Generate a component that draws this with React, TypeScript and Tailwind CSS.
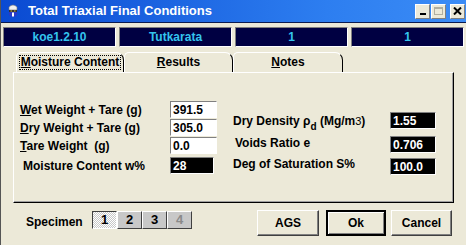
import React from "react";

const sunken =
  "border-t-[#808080] border-l-[#808080] border-b-white border-r-white border";

function AppIcon() {
  return (
    <svg width="12" height="15" viewBox="0 0 12 15">
      <path d="M2 3 Q6 -1 10 3 L10 6 L2 6 Z" fill="#f0f0f0" stroke="#7a7a7a" strokeWidth="0.6" />
      <rect x="2" y="6" width="8" height="2" fill="#333" />
      <rect x="3.5" y="6.5" width="1.5" height="1" fill="#e8c040" />
      <rect x="7" y="6.5" width="1.5" height="1" fill="#e8c040" />
      <path d="M2 8 L10 8 L10 11 Q6 15 2 11 Z" fill="#2a3ac8" />
      <rect x="5" y="8.5" width="2" height="4" fill="#ffffff" />
    </svg>
  );
}

function WinButton({ kind }: { kind: "min" | "max" | "close" }) {
  return (
    <div className="w-[15px] h-[15px] bg-[#ece9d8] border border-t-white border-l-white border-b-[#808080] border-r-[#808080] flex items-center justify-center">
      {kind === "min" && <div className="w-[6px] h-[2px] bg-black mt-[6px]" />}
      {kind === "max" && <div className="w-[9px] h-[8px] border border-[#b0aea0] border-t-2" />}
      {kind === "close" && (
        <svg width="9" height="8" viewBox="0 0 9 8">
          <path d="M1 0.5 L8 7.5 M8 0.5 L1 7.5" stroke="#000" strokeWidth="2" />
        </svg>
      )}
    </div>
  );
}

function Tab({ u, rest, active, w }: { u: string; rest: string; active?: boolean; w: string }) {
  return (
    <div
      className={`${w} h-[20px] border-t border-l border-r border-t-white border-l-white border-r-black rounded-tl-[5px] rounded-tr-[8px] flex items-center justify-center bg-[#ece9d8]`}
    >
      <span className={`text-[12px] font-bold leading-[13px] px-[1px] ${active ? "outline-1 outline-dotted outline-black" : ""}`}>
        <span className="underline">{u}</span>
        {rest}
      </span>
    </div>
  );
}

function Field({ value, w, dark }: { value: string; w: string; dark?: boolean }) {
  return (
    <div
      className={`${w} h-[17px] ${sunken} ${dark ? "bg-black text-white" : "bg-white text-black"} text-[12px] leading-[14px] pl-[2px] flex items-center`}
    >
      {value}
    </div>
  );
}

function Btn({ children, w, def }: { children: React.ReactNode; w: string; def?: boolean }) {
  return (
    <div
      className={`${w} h-[26px] bg-[#ece9d8] flex items-center justify-center text-[12px] font-bold ${
        def
          ? "border-2 border-black shadow-[inset_1px_1px_0_white,inset_-1px_-1px_0_#808080]"
          : "border border-t-white border-l-white border-b-[#404040] border-r-[#404040] shadow-[inset_-1px_-1px_0_#808080]"
      }`}
    >
      {children}
    </div>
  );
}

function SpecBtn({ n, pressed, disabled }: { n: string; pressed?: boolean; disabled?: boolean }) {
  return (
    <div
      className={`w-[25px] h-[18px] flex items-center justify-center text-[13px] font-bold border ${
        pressed
          ? "border-t-[#404040] border-l-[#404040] border-b-white border-r-white bg-[repeating-conic-gradient(#ffffff_0_25%,#c8c8c8_0_50%)] bg-[length:2px_2px]"
          : "bg-[#c8c8c8] border-t-white border-l-white border-b-[#404040] border-r-[#404040]"
      } ${disabled ? "text-[#8a8a8a]" : "text-black"}`}
    >
      {n}
    </div>
  );
}

export default function App() {
  const info = ["koe1.2.10", "Tutkarata", "1", "1"];

  return (
    <div className="w-[466px] h-[245px] bg-[#ece9d8] flex flex-col border-l border-[#555] overflow-hidden font-['Liberation_Sans',Arial,sans-serif] text-black">
      {/* title bar */}
      <div className="h-[23px] shrink-0 flex items-center pl-[6px] pr-[1px] bg-[linear-gradient(90deg,#0a4ad2,#2d7ef0_70%,#3b8cf6)] border-b border-[#0a1a50]">
        <AppIcon />
        <span className="ml-[9px] text-white font-bold text-[13px]">Total Triaxial Final Conditions</span>
        <div className="ml-auto flex items-center gap-[1px]">
          <WinButton kind="min" />
          <WinButton kind="max" />
          <div className="w-[2px]" />
          <WinButton kind="close" />
        </div>
      </div>

      {/* info boxes */}
      <div className="mt-[4px] px-[2px] flex gap-[3px]">
        {info.map((t, i) => (
          <div
            key={i}
            className={`flex-1 h-[20px] bg-[#000042] ${sunken} flex items-center justify-center text-[12px] font-bold text-[#34c4ee]`}
          >
            {t}
          </div>
        ))}
      </div>

      {/* tabs */}
      <div className="mt-[5px] ml-[15px] flex items-end">
        <Tab w="w-[108px]" u="M" rest="oisture Content" active />
        <Tab w="w-[109px]" u="R" rest="esults" />
        <Tab w="w-[110px]" u="N" rest="otes" />
      </div>

      {/* panel */}
      <div className="ml-[12px] w-[441px] h-[131px] shrink-0 border border-t-white border-l-white border-r-black border-b-black shadow-[inset_-1px_-1px_0_#a0a0a0] flex">
        <div className="ml-[6px] pt-[28px] w-[197px] flex flex-col text-[12px] font-bold">
          <div className="flex items-center h-[17px]">
            <span className="w-[150px]">
              <span className="underline">W</span>et Weight + Tare (g)
            </span>
            <Field value="391.5" w="w-[47px]" />
          </div>
          <div className="flex items-center h-[17px] mt-[1px]">
            <span className="w-[150px]">
              <span className="underline">D</span>ry Weight + Tare (g)
            </span>
            <Field value="305.0" w="w-[47px]" />
          </div>
          <div className="flex items-center h-[17px] mt-[1px]">
            <span className="w-[150px]">
              <span className="underline">T</span>are Weight&nbsp; (g)
            </span>
            <Field value="0.0" w="w-[47px]" />
          </div>
          <div className="flex items-center h-[17px] mt-[3px]">
            <span className="w-[150px] pl-[3px]">Moisture Content w%</span>
            <Field value="28" w="w-[44px]" dark />
          </div>
        </div>

        <div className="ml-[16px] pt-[39px] flex flex-col text-[12px] font-bold">
          <div className="flex items-center h-[17px]">
            <span className="w-[157px]">
              Dry Density ρ<sub className="text-[10px] align-[-3px]">d</sub> (Mg/m
              <span className="font-normal text-[11px]">3</span>)
            </span>
            <Field value="1.55" w="w-[46px]" dark />
          </div>
          <div className="flex items-center h-[17px] mt-[7px]">
            <span className="w-[157px] pl-[2px] -mt-[3px]">Voids Ratio e</span>
            <Field value="0.706" w="w-[46px]" dark />
          </div>
          <div className="flex items-center h-[17px] mt-[5px]">
            <span className="w-[157px] -mt-[5px]">Deg of Saturation S%</span>
            <Field value="100.0" w="w-[46px]" dark />
          </div>
        </div>
      </div>

      {/* bottom */}
      <div className="flex items-start pt-[7px]">
        <span className="ml-[25px] mt-[3px] text-[12px] font-bold w-[66px]">Specimen</span>
        <div className="flex mt-[1px]">
          <SpecBtn n="1" pressed />
          <SpecBtn n="2" />
          <SpecBtn n="3" />
          <SpecBtn n="4" disabled />
        </div>
        <div className="ml-auto mr-[14px] flex">
          <Btn w="w-[62px]">AGS</Btn>
          <div className="w-[7px]" />
          <Btn w="w-[60px]" def>
            Ok
          </Btn>
          <div className="w-[5px]" />
          <Btn w="w-[61px]">Cancel</Btn>
        </div>
      </div>
    </div>
  );
}
